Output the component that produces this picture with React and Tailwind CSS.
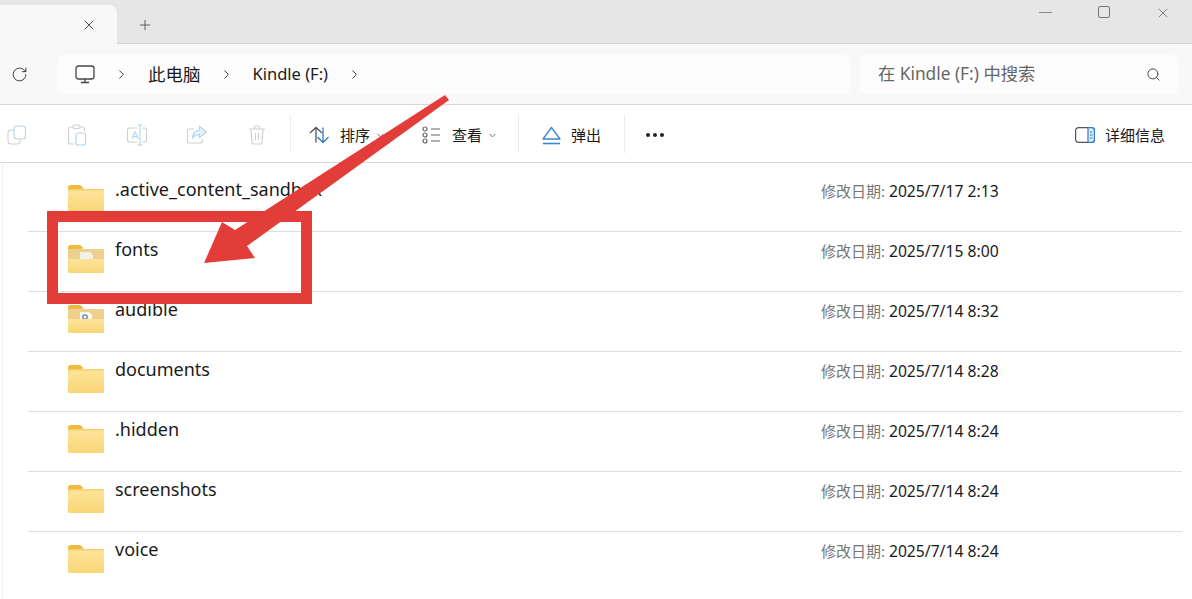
import React from "react";
import { X, Plus, RotateCw, ChevronRight, ChevronDown, Search } from "lucide-react";

const files = [
	{ name: ".active_content_sandbox", date: "2025/7/17 2:13" },
	{ name: "fonts", date: "2025/7/15 8:00", kind: "doc" },
	{ name: "audible", date: "2025/7/14 8:32", kind: "media" },
	{ name: "documents", date: "2025/7/14 8:28" },
	{ name: ".hidden", date: "2025/7/14 8:24" },
	{ name: "screenshots", date: "2025/7/14 8:24" },
	{ name: "voice", date: "2025/7/14 8:24" },
];

const FolderIcon = ({ kind }) => (
	<svg width="38" height="30" viewBox="0 0 38 30" className="shrink-0">
		<defs>
			<linearGradient id="folderFront" x1="0" y1="0" x2="0" y2="1">
				<stop offset="0" stopColor="#fde49a" />
				<stop offset="1" stopColor="#f9d677" />
			</linearGradient>
		</defs>
		<path d="M1 3.5C1 2 2 1 3.5 1h8.5c1 0 1.8.4 2.6 1.2L17 4.500 1 6z" fill="#efb93f" />
		<path d="M1 5h34.500c.9 0 1.500.6 1.500 1.500V18H1z" fill={kind ? "#ecd08c" : "#f5cf6e"} />
		{kind === "doc" && <path d="M13 8h10l3 3v6H13z" fill="#f3f1ea" />}
		{kind === "media" && (
			<>
				<path d="M13 8h9l3 3v6H13z" fill="#f7f7f4" />
				<circle cx="18" cy="13" r="2.200" fill="none" stroke="#6f84a0" strokeWidth="1.300" />
			</>
		)}
		<path
			d={kind ? "M1 15h36v12.500c0 1-.7 1.500-1.500 1.500h-33C1.700 29 1 28.500 1 27.500z" : "M1 6.500h36v21c0 1-.7 1.500-1.500 1.500h-33C1.700 29 1 28.500 1 27.500z"}
			fill="url(#folderFront)"
		/>
	</svg>
);

const CopyIcon = () => (
	<svg width="20" height="20" viewBox="0 0 20 20" fill="none" strokeWidth="1.100">
		<rect x="1" y="5" width="12" height="14" rx="3" stroke="#d0d0d0" />
		<rect x="7" y="1" width="11.500" height="13" rx="3" stroke="#b5d3ec" fill="#fff" />
	</svg>
);

const PasteIcon = () => (
	<svg width="20" height="22" viewBox="0 0 20 22" fill="none" strokeWidth="1.100">
		<path d="M6 3H3.500A2 2 0 0 0 1.500 5v13a2 2 0 0 0 2 2H7M13 3h2.500a2 2 0 0 1 2 2v2" stroke="#d0d0d0" />
		<rect x="6" y="1" width="7" height="3.500" rx="1.500" stroke="#d0d0d0" />
		<rect x="9" y="9" width="9.500" height="12" rx="2" stroke="#b5d3ec" />
	</svg>
);

const RenameIcon = () => (
	<svg width="22" height="22" viewBox="0 0 22 22" fill="none" strokeWidth="1.100">
		<path d="M11 4H3.500a2 2 0 0 0-2 2v10a2 2 0 0 0 2 2H11M16 4h2.500a2 2 0 0 1 2 2v10a2 2 0 0 1-2 2H16" stroke="#d0d0d0" />
		<path d="M6 15l2.800-7h.6l2.800 7M7 12.500h4.400" stroke="#b5d3ec" />
		<path d="M11.500 1h2.500m0 0h2.500M14 1v20m-2.500 0h5" stroke="#b5d3ec" />
	</svg>
);

const ShareIcon = () => (
	<svg width="22" height="20" viewBox="0 0 22 20" fill="none" strokeWidth="1.100">
		<path d="M8 4H3.500a2 2 0 0 0-2 2v10a2 2 0 0 0 2 2h11a2 2 0 0 0 2-2v-2" stroke="#d0d0d0" />
		<path d="M13.500 1.500L20.500 7l-7 5.500V9.500c-3.500 0-5.500 1-7 4 0-5 2.500-8 7-8.500z" stroke="#b5d3ec" fill="#e8f2fa" />
	</svg>
);

const TrashIcon = () => (
	<svg width="18" height="20" viewBox="0 0 18 20" fill="none" stroke="#d0d0d0" strokeWidth="1.200">
		<path d="M1 4h16M6.500 4V2.500A1.500 1.500 0 0 1 8 1h2a1.500 1.500 0 0 1 1.500 1.500V4M3 4l1 13.500A1.500 1.500 0 0 0 5.500 19h7a1.500 1.500 0 0 0 1.500-1.500L15 4M7.500 8v7M10.500 8v7" />
	</svg>
);

const SortIcon = () => (
	<svg width="21" height="18" viewBox="0 0 21 18" fill="none" strokeWidth="1.300">
		<path d="M7 16.500V1.500M1 7l6-5.500L13 7" stroke="#555" />
		<path d="M14 1.500v15M8.500 11l5.500 5.500 5.500-5.500" stroke="#2f7ac4" />
	</svg>
);

const ViewIcon = () => (
	<svg width="19" height="18" viewBox="0 0 19 18" fill="none" stroke="#666" strokeWidth="1.200">
		<circle cx="3" cy="3" r="2" />
		<circle cx="3" cy="9" r="2" />
		<circle cx="3" cy="15" r="2" />
		<path d="M9 3h9M9 9h9M9 15h9" />
	</svg>
);

const EjectIcon = () => (
	<svg width="19" height="19" viewBox="0 0 19 19" fill="none" stroke="#3e86c6" strokeWidth="1.300">
		<path d="M9.500 1.500L18 13H1z" strokeLinejoin="round" />
		<path d="M1 17.500h17" strokeWidth="1.600" />
	</svg>
);

const DetailsIcon = () => (
	<svg width="20" height="16" viewBox="0 0 20 16" fill="none">
		<rect x="0.600" y="0.600" width="18.800" height="14.800" rx="3" stroke="#555" strokeWidth="1.200" />
		<path d="M13 .6h3.400a3 3 0 0 1 3 3v8.800a3 3 0 0 1-3 3H13z" fill="#dcebf8" stroke="#2f7ac4" strokeWidth="1.200" />
		<path d="M15 5h2.400M15 8h2.400M15 11h2.400" stroke="#2f7ac4" />
	</svg>
);

const Chevron = ({ className }) => <ChevronRight size={15} strokeWidth={1.500} className={`text-[#333] ${className}`} />;

const Divider = ({ className }) => <div className={`w-px h-[38px] bg-[#eaeaea] shrink-0 ${className}`} />;

const Slot = ({ className, children }) => <div className={`flex items-center justify-center shrink-0 ${className}`}>{children}</div>;

const App = () => {
	return (
		<div className="relative w-[1192px] h-[599px] overflow-hidden bg-white text-[#1a1a1a] font-['Noto_Sans','Noto_Sans_CJK_SC',sans-serif]">
			{/* tab strip */}
			<div className="flex h-[44px] bg-[#e6e6e6] border-b border-[#d6d6d6]">
				<div className="flex items-center justify-end w-[117px] h-[39px] mt-[5px] pr-[20px] bg-[#f8f8f8] rounded-tr-lg">
					<X size={16} strokeWidth={1.300} className="text-[#333]" />
				</div>
				<div className="flex items-center justify-center w-[56px] pt-[7px]">
					<Plus size={16} strokeWidth={1.400} className="text-[#555]" />
				</div>
				<div className="flex flex-1 items-start justify-end pt-[4px] pr-[21px] gap-[46px]">
					<div className="w-[13px] h-px bg-[#888] mt-[8px]" />
					<div className="w-[12px] h-[12px] mt-[2px] border border-[#777] rounded-[2px]" />
					<X size={16} strokeWidth={1.200} className="text-[#666] ml-[-1px] mt-[1px]" />
				</div>
			</div>

			{/* address row */}
			<div className="flex items-center h-[61px] px-[10px] pr-[14px] bg-[#f8f8f8] border-b border-[#d8d8d8]">
				<Slot className="w-[18px]">
					<RotateCw size={17} strokeWidth={1.300} className="text-[#333]" />
				</Slot>
				<div className="flex items-center w-[792px] h-[39px] ml-[30px] pl-[17px] bg-[#fdfdfd] rounded-md text-[16.500px]">
					<svg width="20" height="19" viewBox="0 0 20 19" fill="none" stroke="#444" strokeWidth="1.300">
						<rect x="1" y="1" width="18" height="13" rx="2.500" />
						<path d="M10 14v3M6 17.500h8" />
					</svg>
					<Chevron className="ml-[19px]" />
					<span className="ml-[19px] text-[17.500px]">此电脑</span>
					<Chevron className="ml-[18px]" />
					<span className="ml-[19px]">Kindle (F:)</span>
					<Chevron className="ml-[19px]" />
				</div>
				<div className="flex items-center justify-between w-[318px] h-[39px] ml-[10px] pl-[18px] pr-[17px] bg-[#fdfdfd] rounded-md text-[17.300px] text-[#666]">
					<span>在 Kindle (F:) 中搜索</span>
					<Search size={15} strokeWidth={1.400} className="text-[#333]" />
				</div>
			</div>

			{/* command bar */}
			<div className="flex items-center h-[58px] pt-[3px] border-b border-[#d8d8d8] text-[15px]">
				<Slot className="w-[34px]"><CopyIcon /></Slot>
				<Slot className="w-[60px] ml-[22px] -translate-x-[9px]"><PasteIcon /></Slot>
				<Slot className="w-[60px] -translate-x-[9px]"><RenameIcon /></Slot>
				<Slot className="w-[60px] -translate-x-[9px]"><ShareIcon /></Slot>
				<Slot className="w-[60px] -translate-x-[9px]"><TrashIcon /></Slot>
				<Divider className="ml-[-6px] -translate-y-[1px]" />
				<div className="ml-[18px] flex items-center">
					<SortIcon />
					<span className="ml-[10px]">排序</span>
					<ChevronDown size={11} className="ml-[5px] text-[#666]" />
				</div>
				<div className="ml-[36px] flex items-center">
					<ViewIcon />
					<span className="ml-[11px]">查看</span>
					<ChevronDown size={11} className="ml-[5px] text-[#666]" />
				</div>
				<Divider className="ml-[20px] -translate-y-[1px]" />
				<div className="ml-[23px] flex items-center">
					<EjectIcon />
					<span className="ml-[10px]">弹出</span>
				</div>
				<Divider className="ml-[23px] -translate-y-[1px]" />
				<div className="ml-[21px] flex gap-[3px]">
					<div className="w-[4px] h-[4px] rounded-full bg-[#222]" />
					<div className="w-[4px] h-[4px] rounded-full bg-[#222]" />
					<div className="w-[4px] h-[4px] rounded-full bg-[#222]" />
				</div>
				<div className="ml-auto mr-[27px] flex items-center">
					<DetailsIcon />
					<span className="ml-[10px]">详细信息</span>
				</div>
			</div>

			{/* file list */}
			<div className="ml-[2px] pl-[25px] pr-[10px] pt-[9px] border-l border-[#f0f0f0] h-full">
				{files.map((file, i) => (
					<div key={file.name} className={`flex h-[60px] ${i < files.length - 1 ? "border-b border-[#dedede]" : ""}`}>
						<div className="ml-[39px] mt-[12px] h-[30px]"><FolderIcon kind={file.kind} /></div>
						<div className="ml-[10px] w-[706px] mt-[4px] text-[18px] leading-[26px] text-[#1a1a1a]">{file.name}</div>
						<div className="mt-[8px] text-[15.700px] leading-[22px] whitespace-nowrap">
							<span className="text-[#777] text-[15px]">修改日期: </span>
							<span>{file.date}</span>
						</div>
					</div>
				))}
			</div>

			{/* red annotation over the screenshot */}
			<div className="absolute left-[47px] top-[211px] w-[265px] h-[93px] border-[11px] border-[#e23d39]" />
			<svg className="absolute left-0 top-0 pointer-events-none" width="1192" height="599" viewBox="0 0 1192 599">
				<polygon points="445,95 449,100 247,246 255,258 204,263 222,222 235,230" fill="#e23d39" />
			</svg>
		</div>
	);
};

export default App;
